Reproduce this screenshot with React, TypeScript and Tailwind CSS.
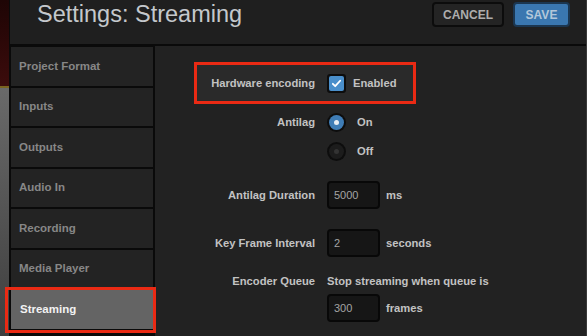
import React from 'react';

const navItems = [
  'Project Format',
  'Inputs',
  'Outputs',
  'Audio In',
  'Recording',
  'Media Player',
  'Streaming',
];

// Backdrop strip visible at the left edge
function BackdropStrip() {
  return (
    <div className="w-[9px] flex flex-col flex-shrink-0">
      <div className="h-[86px] bg-gradient-to-b from-[#1e0505] to-[#3c0c0c]" />
      <div className="h-[2px] bg-[#7a6420]" />
      <div className="flex-1 bg-gradient-to-b from-[#6a6a6a] to-[#3e3e3e]" />
    </div>
  );
}

function Header() {
  return (
    <div className="h-[46px] flex items-start justify-between bg-[#1f1f1f] border-b-2 border-[#0a0a0a]">
      <h1 className="ml-[27px] mt-[0px] text-[23.5px] leading-[28px] text-[#c4c8cc]">
        Settings: Streaming
      </h1>
      <div className="flex gap-[9px] mt-[2px] mr-[16px]">
        <button className="w-[72px] h-[25px] rounded-[4px] border-2 border-[#0c0c0c] bg-[#242424] text-[12px] font-bold text-[#adadad]">
          CANCEL
        </button>
        <button className="w-[57px] h-[25px] rounded-[4px] border-2 border-[#1b3650] bg-[#3a77b0] text-[12px] font-bold text-[#b3c7da]">
          SAVE
        </button>
      </div>
    </div>
  );
}

function Sidebar() {
  return (
    <div className="relative w-[145px] flex-shrink-0 bg-[#0a0a0a] flex flex-col gap-[2px] pt-[1px] pr-[2px] pl-[1px]">
      {navItems.map((item) => {
        const active = item === 'Streaming';
        return (
          <div
            key={item}
            className={
              active
                ? 'h-[38.5px] flex items-center pl-[9px] bg-[#646464] text-[11.5px] font-bold text-[#f2f2f2]'
                : 'h-[38.5px] flex items-center pl-[8px] bg-[#232323] text-[11.5px] font-bold text-[#878787]'
            }
          >
            {item}
          </div>
        );
      })}
      {/* highlight around the active item */}
      <div className="absolute left-[-5px] top-[241px] w-[151px] h-[46px] border-[3px] border-[#ea2a14]" />
    </div>
  );
}

function Radio({ on }: { on: boolean }) {
  return (
    <div className="w-[19px] h-[19px] rounded-full bg-[#0d0d0d] flex items-center justify-center">
      <div
        className={
          on
            ? 'w-[15px] h-[15px] rounded-full bg-[#3f7db6] flex items-center justify-center'
            : 'w-[15px] h-[15px] rounded-full bg-[#1c1c1c] flex items-center justify-center'
        }
      >
        <div className={on ? 'w-[5px] h-[5px] rounded-full bg-[#e8eef4]' : 'w-[5px] h-[5px] rounded-full bg-[#333333]'} />
      </div>
    </div>
  );
}

function NumberBox({ value }: { value: string }) {
  return (
    <div className="w-[53px] h-[28px] rounded-[4px] border-2 border-[#080808] bg-[#161616] flex items-center pl-[5px] text-[11px] font-normal text-[#a4a4a4]">
      {value}
    </div>
  );
}

function Label({ children }: { children: React.ReactNode }) {
  return <div className="w-[160px] text-right">{children}</div>;
}

function Content() {
  return (
    <div className="flex-1 bg-[#222222] flex flex-col pt-[16px] text-[11.2px] font-bold text-[#c2c2c2]">
      {/* Hardware encoding, highlighted */}
      <div className="ml-[39px] w-[222px] h-[42px] border-[3px] border-[#ea2a14] bg-[#2a2a2a] flex items-center">
        <div className="w-[118px] text-right">Hardware encoding</div>
        <div className="ml-[12px] w-[19px] h-[19px] rounded-[3px] bg-[#0d0d0d] flex items-center justify-center">
          <div className="w-[15px] h-[15px] rounded-[2px] bg-[#4a8fcb] flex items-center justify-center">
            <svg width="11" height="11" viewBox="0 0 12 12" fill="none">
              <path d="M2 6.3l2.6 2.6L10 3" stroke="#ffffff" strokeWidth="2" strokeLinecap="round" strokeLinejoin="round" />
            </svg>
          </div>
        </div>
        <div className="ml-[7px]">Enabled</div>
      </div>

      <div className="mt-[9px] h-[19px] flex items-center">
        <Label>Antilag</Label>
        <div className="ml-[12px]">
          <Radio on />
        </div>
        <div className="ml-[11px]">On</div>
      </div>
      <div className="mt-[10px] h-[19px] flex items-center">
        <div className="w-[160px]" />
        <div className="ml-[12px]">
          <Radio on={false} />
        </div>
        <div className="ml-[11px]">Off</div>
      </div>

      <div className="mt-[20px] flex items-center">
        <Label>Antilag Duration</Label>
        <div className="ml-[12px]">
          <NumberBox value="5000" />
        </div>
        <div className="ml-[6px]">ms</div>
      </div>

      <div className="mt-[20px] flex items-center">
        <Label>Key Frame Interval</Label>
        <div className="ml-[12px]">
          <NumberBox value="2" />
        </div>
        <div className="ml-[6px]">seconds</div>
      </div>

      <div className="mt-[16px] h-[16px] flex items-center">
        <Label>Encoder Queue</Label>
        <div className="ml-[12px]">Stop streaming when queue is</div>
      </div>
      <div className="mt-[5px] flex items-center">
        <div className="w-[160px]" />
        <div className="ml-[12px]">
          <NumberBox value="300" />
        </div>
        <div className="ml-[6px]">frames</div>
      </div>
    </div>
  );
}

export default function App() {
  return (
    <div
      className="w-[587px] h-[336px] overflow-hidden flex bg-[#111]"
      style={{ fontFamily: '"Liberation Sans", Arial, sans-serif' }}
    >
      <BackdropStrip />
      <div className="flex-1 flex flex-col border-l border-[#0a0a0a] border-r border-r-[#3a3a3a]">
        <Header />
        <div className="flex-1 flex">
          <Sidebar />
          <Content />
        </div>
      </div>
    </div>
  );
}
